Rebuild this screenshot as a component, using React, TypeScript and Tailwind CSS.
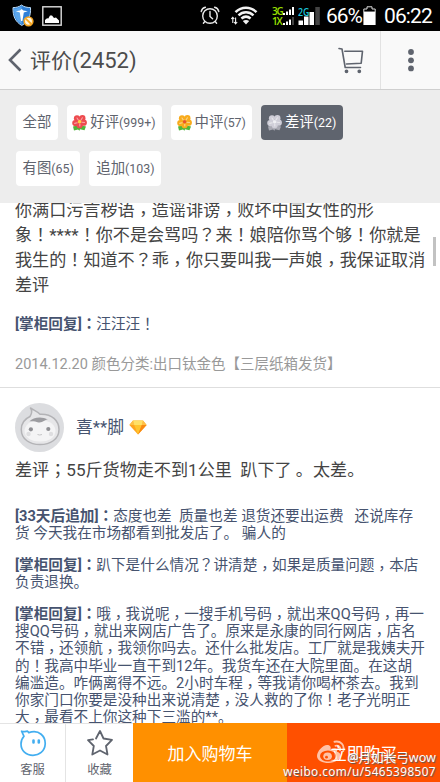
import type { ReactNode } from "react";

const FONT = "font-[Roboto,'Noto_Sans_CJK_SC',sans-serif]";

// Full-width marks sit in the middle of their cell, except the full stop.
// Zero leading keeps the second font from stretching the line.
function Cn({ children }: { children: string }) {
    return (
        <>
            {children.split(/([，！？：；])/).map((part, i) =>
                i % 2 ? (
                    <span
                        key={i}
                        className={`font-['Noto_Sans_CJK_TC',sans-serif] leading-[0] ${part === "，" ? "align-[-0.24em]" : "align-baseline"}`}
                    >
                        {part}
                    </span>
                ) : (
                    part
                )
            )}
        </>
    );
}

function Flower({ petal, center, leaf }: { petal: string; center: string; leaf: string }) {
    return (
        <svg width="15" height="16" viewBox="0 0 15 16" className="shrink-0">
            <path d="M1 11.5 5 10.5 7.5 12.5 10 10.5 14 11.5 12.5 15.2 8 14.2 7.5 15.8 6 14.5 2 15.4Z" fill={leaf} />
            <g fill={petal}>
                <circle cx="5" cy="3.3" r="3.1" />
                <circle cx="10.4" cy="3.2" r="3.1" />
                <circle cx="11.8" cy="7.7" r="3.1" />
                <circle cx="7.6" cy="10.2" r="3.1" />
                <circle cx="3.3" cy="8.1" r="3.1" />
            </g>
            <g stroke="#fff" strokeOpacity="0.5" strokeWidth="1.1" strokeLinecap="round">
                <path d="M5 3 6.3 5M10.4 2.8 9 5M12.5 7.5 10 7.3M7.8 11V9M2.7 8.4 5.2 7.8" />
            </g>
            <circle cx="7.6" cy="6.7" r="1.8" fill={center} />
        </svg>
    );
}

function Chip({ label, count, icon, active }: { label: string; count?: string; icon?: ReactNode; active?: boolean }) {
    return (
        <div
            className={`flex h-[35px] items-center rounded-[4px] whitespace-nowrap ${icon ? "pl-[5.5px]" : "pl-[7px]"} pr-[6.5px] ${
                active ? "bg-[#5f646e] text-white" : "bg-white text-[#5f646e]"
            }`}
        >
            {icon}
            <span className={`mt-[2px] text-[14.4px] leading-none ${icon ? "ml-[3px]" : ""}`}>{label}</span>
            {count && <span className="mt-px text-[12.4px] leading-none">({count})</span>}
        </div>
    );
}

function MiniBars({ top }: { top: number }) {
    return (
        <svg width="11" height="8" viewBox="0 0 11 8">
            {[2, 3.5, 5.5, 8].map((h, i) => (
                <rect key={i} x={i * 3} y={8 - h} width="2" height={h} fill={i < top ? "#fff" : "#444"} />
            ))}
        </svg>
    );
}

function StatusBar() {
    return (
        <div className="flex h-[31px] shrink-0 items-center bg-black text-white">
            <svg width="22" height="23" viewBox="0 0 22 23" className="ml-[11.5px]">
                <path d="M9.5 1C7 3 4 3.6 1 3.6 0.8 12 3 17.5 9.8 21.5 16.5 17.5 19 12 18.5 3.6 15.5 3.6 12 3 9.5 1Z" fill="#2f80d8" stroke="#b9d9f5" strokeWidth="1" />
                <path d="M9.6 2C7.5 3.8 4.7 4.5 2 4.6 2 11 3.5 16.5 9.6 20Z" fill="#5ba6ec" />
                <path d="M3.8 7.3 8 6.6 9.7 5 11.4 6.6 15.8 7.3 11.8 8.6 10.4 17 9.1 17 7.8 8.6Z" fill="#fff" />
                <circle cx="16.5" cy="17.3" r="4.3" fill="#fff6df" stroke="#f5a623" strokeWidth="1.7" />
                <path d="m13.8 14.6 5.4 5.4" stroke="#f5a623" strokeWidth="1.8" />
            </svg>
            <svg width="20" height="20" viewBox="0 0 20 20" className="ml-[8.5px]">
                <rect x="0.8" y="0.8" width="18.4" height="18.4" fill="none" stroke="#ddd" strokeWidth="1.4" />
                <path d="M3 17V14L5 12.2 6.3 12.4 8 9.6 10 9.4 12 12 14 11.5 17 14.5V17Z" fill="#fff" />
            </svg>
            <svg width="20" height="19" viewBox="0 0 20 19" className="ml-[138px]" fill="none" stroke="#e8e8e8" strokeWidth="1.4" strokeLinecap="round">
                <circle cx="10" cy="10" r="7.3" />
                <path d="M10 5.5V10.5L12.6 12.8M1.2 5.5C1.8 3 3 1.8 5.4 1.3M18.8 5.5C18.2 3 17 1.8 14.6 1.3M4.8 15.5 3.4 17.3M15.2 15.5 16.6 17.3" />
            </svg>
            <svg width="27" height="20" viewBox="0 0 27 20" className="ml-[11px]" fill="none" stroke="#f2f2f2">
                <path d="M4.5 6.2C10.5 0.3 19.5 0.3 25.5 6.2M7.5 9.3C11.8 5.3 18.2 5.3 22.5 9.3M10.4 12.5C13.2 10.2 16.8 10.2 19.6 12.5" strokeWidth="2.5" />
                <path d="M11.8 15 15 18.5 18.2 15C16.4 13.5 13.6 13.5 11.8 15Z" fill="#f2f2f2" stroke="none" />
                <path d="M1.8 11.5V17M0.3 13 1.8 11.3 3.3 13M4.6 11.5V17M3.2 16 4.6 17.8 6.2 16" strokeWidth="1.1" />
            </svg>
            <div className="ml-[14px] flex flex-col font-['Open_Sans',sans-serif] text-[10px] leading-[10px] font-semibold text-[#9be000]">
                <div className="flex h-[10px] items-center">
                    <span className="w-[11px] tracking-[-1.2px]">3G</span>
                    <MiniBars top={4} />
                </div>
                <div className="flex h-[10px] items-center">
                    <span className="w-[11px] tracking-[-1.2px]">1X</span>
                    <MiniBars top={3} />
                </div>
            </div>
            <svg width="22" height="20" viewBox="0 0 22 20" className="ml-[4px]">
                <path d="M0.5 14.5H5V19H0.5ZM6 10.5H10.5V19H6ZM11.5 6H16V19H11.5Z" fill="#fff" />
                <path d="M17.3 1H21.8V19H17.3Z" fill="#444" />
                <text x="0" y="9.5" fill="#1cc7dc" fontFamily="Open Sans, sans-serif" fontSize="11" fontWeight="600" textLength="11.5" lengthAdjust="spacingAndGlyphs">2G</text>
            </svg>
            <span className="ml-[6px] w-[37px] text-[21px] leading-[24px] tracking-[-1.1px]">66%</span>
            <svg width="13" height="20" viewBox="0 0 13 20">
                <path d="M4 0.8H9V3H12.2V6H0.8V3H4Z" fill="none" stroke="#ddd" strokeWidth="1" />
                <path d="M0.4 6H12.6V19H0.4Z" fill="#fff" />
            </svg>
            <span className="ml-[8px] text-[21px] leading-[24px] tracking-[-0.9px]">06:22</span>
        </div>
    );
}

function Header() {
    return (
        <div className="flex h-[59px] shrink-0 items-center border-b border-[#cfcfcf] bg-[#f9f9f9]">
            <svg width="14" height="24" viewBox="0 0 14 24" className="ml-[7.5px]" fill="none" stroke="#5f646e" strokeWidth="2.6">
                <path d="M12.5 1.5 2 12 12.5 22.5" />
            </svg>
            <span className="ml-[8.5px] pt-px text-[21px] leading-none text-[#4c4c4c]">
                评价<span className="text-[22px]">(2452)</span>
            </span>
            <svg width="28" height="28" viewBox="0 0 28 28" className="mr-[15px] ml-auto" fill="none" stroke="#5f646e" strokeWidth="1.6" strokeLinecap="round" strokeLinejoin="round">
                <path d="M2 2.5 5 3 8.2 21.5H23.5" />
                <path d="M7.8 5.2H25.5L24.2 17.2 9.5 18" />
                <circle cx="9.5" cy="25.3" r="1.1" fill="#5f646e" />
                <circle cx="22.3" cy="25.3" r="1.1" fill="#5f646e" />
            </svg>
            <div className="flex h-full w-[60px] items-center border-l border-[#e2e2e2]">
                <svg width="8" height="24" viewBox="0 0 8 24" className="ml-[26px]" fill="#5f646e">
                    <circle cx="4" cy="4" r="2.9" />
                    <circle cx="4" cy="12.3" r="2.9" />
                    <circle cx="4" cy="20.4" r="2.9" />
                </svg>
            </div>
        </div>
    );
}

function Filters() {
    return (
        <div className="flex h-[113px] shrink-0 flex-col gap-[11px] bg-[#ededed] pt-[15px] pl-[15.5px]">
            <div className="flex gap-[9px]">
                <Chip label="全部" />
                <Chip label="好评" count="999+" icon={<Flower petal="#ee4b4f" center="#ffd23f" leaf="#4fb63a" />} />
                <Chip label="中评" count="57" icon={<Flower petal="#f8ab1c" center="#e8552a" leaf="#4fb63a" />} />
                <Chip label="差评" count="22" active icon={<Flower petal="#cfced8" center="#f0f0f4" leaf="#a9a9b3" />} />
            </div>
            <div className="flex gap-[9px]">
                <Chip label="有图" count="65" />
                <Chip label="追加" count="103" />
            </div>
        </div>
    );
}

function Lines({ lines, className }: { lines: string[]; className?: string }) {
    return (
        <div className={`text-[17.1px] leading-[25px] whitespace-pre text-[#444] ${className ?? ""}`}>
            {lines.map((line) => (
                <div key={line} className="h-[25px]">
                    <Cn>{line}</Cn>
                </div>
            ))}
        </div>
    );
}

function Reply({ title, lines, className }: { title: string; lines: string[]; className: string }) {
    const [first, ...rest] = lines;
    return (
        <div className={`text-[14.65px] leading-[17.15px] whitespace-pre text-[#46536f] ${className}`}>
            <div className="h-[17.15px]">
                <b className="font-bold">
                    [{title}]<Cn>：</Cn>
                </b>
                <Cn>{first}</Cn>
            </div>
            {rest.map((line) => (
                <div key={line} className="h-[17.15px]">
                    <Cn>{line}</Cn>
                </div>
            ))}
        </div>
    );
}

function Avatar() {
    return (
        <svg width="49" height="49" viewBox="0 0 49 49">
            <circle cx="24.5" cy="24.5" r="24.5" fill="#dcdde0" />
            <path d="M15 13.5C17 10.5 17.5 8 15.5 5 19.5 7.5 22.5 8.5 25 11.2 37 10.5 44 18 44 26.5 44 36.5 35 41.5 25 41.5S6.3 36.5 6.3 26.5C6.3 20.5 9.5 16 15 13.5Z" fill="#e6e6e8" stroke="#b3b3b6" strokeWidth="1.5" strokeLinejoin="round" />
            <path d="M9.5 27C11.5 19 18 17.5 25 17.5S39 19 40.5 27C40.5 35.5 33 38.5 25 38.5S9.5 35.5 9.5 27Z" fill="#f4f4f5" />
            <path d="M14.5 18.3C18 14 27 13 33 16.5 29 16.5 28 20.3 22.5 19.2 19 18.1 17 18.8 14.5 18.3Z" fill="#9c9ca0" />
            <circle cx="15.9" cy="26.3" r="2.1" fill="#8f8f93" />
            <circle cx="33.3" cy="26" r="2.1" fill="#8f8f93" />
            <circle cx="13.5" cy="31" r="2.2" fill="#dedee0" />
            <circle cx="36" cy="31" r="2.2" fill="#dedee0" />
            <path d="M22.5 31.5Q24.7 32.5 27 31.5" fill="none" stroke="#c6c6c8" />
        </svg>
    );
}

function Reviews() {
    return (
        <div className="relative min-h-0 flex-1 overflow-hidden bg-white">
            <div className="-mt-[5px] px-[15px]">
                <Lines
                    lines={[
                        "你满口污言秽语，造谣诽谤，败坏中国女性的形",
                        "象！****！你不是会骂吗？来！娘陪你骂个够！你就是",
                        "我生的！知道不？乖，你只要叫我一声娘，我保证取消",
                        "差评",
                    ]}
                />
                <Reply className="mt-[18px]" title="掌柜回复" lines={["汪汪汪！"]} />
                <div className="mt-[21.5px] text-[14.5px] leading-[20px] whitespace-nowrap text-[#999]">
                    2014.12.20 颜色分类:出口钛金色【三层纸箱发货】
                </div>
            </div>
            <div className="mt-[12px] border-t border-[#dedede] px-[15px] pt-[15px]">
                <div className="flex items-center">
                    <Avatar />
                    <span className="ml-[12px] text-[16.8px] leading-none text-[#46536f]">喜**脚</span>
                    <svg width="18" height="15" viewBox="0 0 18 15" className="ml-[5px]">
                        <path d="M4 0.5H14L17.6 5 9 14.6 0.4 5Z" fill="#ffa51f" />
                        <path d="M4 0.5 5.2 5H0.4ZM14 0.5 12.8 5H17.6Z" fill="#ffc046" />
                        <path d="M4 0.5H14L12.8 5H5.2Z" fill="#ffe066" />
                        <path d="M5.2 5H12.8L9 14.6Z" fill="#ffc52e" />
                        <path d="M12.8 5H17.6L9 14.6Z" fill="#f98a12" />
                    </svg>
                </div>
                <Lines className="mt-[6px]" lines={["差评；55斤货物走不到1公里  趴下了 。太差。"]} />
                <Reply
                    className="mt-[25px]"
                    title="33天后追加"
                    lines={["态度也差  质量也差 退货还要出运费   还说库存", "货 今天我在市场都看到批发店了。 骗人的"]}
                />
                <Reply
                    className="mt-[15px]"
                    title="掌柜回复"
                    lines={["趴下是什么情况？讲清楚，如果是质量问题，本店", "负责退换。"]}
                />
                <Reply
                    className="mt-[15px]"
                    title="掌柜回复"
                    lines={[
                        "哦，我说呢，一搜手机号码，就出来QQ号码，再一",
                        "搜QQ号码，就出来网店广告了。原来是永康的同行网店，店名",
                        "不错，还领航，我领你吗去。还什么批发店。工厂就是我姨夫开",
                        "的！我高中毕业一直干到12年。我货车还在大院里面。在这胡",
                        "编滥造。咋俩离得不远。2小时车程，等我请你喝杯茶去。我到",
                        "你家门口你要是没种出来说清楚，没人救的了你！老子光明正",
                        "大，最看不上你这种下三滥的**。",
                    ]}
                />
            </div>
            <div className="absolute top-[34px] right-[4px] h-[29px] w-[3px] bg-[#c2c2c2]" />
        </div>
    );
}

function BottomBar() {
    return (
        <div className="relative flex h-[59px] shrink-0 bg-white text-[#5f646e]">
            <div className="flex w-[66px] flex-col items-center border-t border-r border-[#e4e4e4] pt-[5px]">
                <svg width="28" height="28" viewBox="0 0 28 28" fill="none" stroke="#42aef0" strokeWidth="1.7" strokeLinejoin="round" strokeLinecap="round">
                    <path d="M9.8 3.6C20.5 -0.2 26.5 8 26.2 15 25.8 22.5 20 26.3 14 26.3 7 26.3 2 21.5 2 15 2 12 3 9.5 5 7.3L2.6 2.2C5 3.2 6.5 2.4 8.6 2.2L9.8 3.6" />
                    <path d="M14.5 11.5V13.5M19.8 11.5V13.5" strokeWidth="2.6" />
                </svg>
                <span className="mt-[6.5px] text-[12.3px] leading-none">客服</span>
            </div>
            <div className="flex w-[67px] flex-col items-center border-t border-[#e4e4e4] pt-[5px]">
                <svg width="28" height="28" viewBox="0 0 28 28" fill="none" stroke="#5f646e" strokeWidth="1.8" strokeLinejoin="round" strokeLinecap="round">
                    <path d="M10 9.5 14 2 17.5 9.5 26 10.8 20 17 21.5 25.5 14 21.5 6.3 25.5 7.8 17 2 11.2 7 10.3" />
                </svg>
                <span className="mt-[6.5px] text-[12.3px] leading-none">收藏</span>
            </div>
            <div className="flex w-[154px] items-center justify-center bg-[#ff9000] pt-[4px] text-[17px] text-white">加入购物车</div>
            <div className="flex flex-1 items-center justify-center bg-[#ff5000] pt-[4px] text-[16.8px] text-white">立即购买</div>
            {/* watermark */}
            <div className="absolute right-[4px] bottom-[4px] flex flex-col items-end whitespace-nowrap text-white [text-shadow:1px_1px_1px_#555]">
                <span className="font-['Noto_Sans','Noto_Sans_CJK_SC',sans-serif] text-[12.6px] leading-[14px]">@月如长弓wow</span>
                <span className="font-['Noto_Sans',sans-serif] text-[11.8px] leading-[13px] tracking-[0.4px]">weibo.com/u/5465398507</span>
            </div>
            <svg width="30" height="24" viewBox="0 0 30 24" className="absolute top-[17px] left-[316px] opacity-65">
                <path d="M11 5C7 5 1 11 1 16 1 20.5 6.5 23 12.5 23 19.5 23 24.5 19 24.5 15.5 24.5 13.5 23 12.3 21 11.8 22 9 20 7.5 14.5 9.5 15.3 6.5 14 5 11 5Z" fill="#fff" />
                <ellipse cx="12" cy="16" rx="8" ry="5.5" fill="#ff5000" />
                <ellipse cx="11.6" cy="16.3" rx="4.3" ry="3.8" fill="#fff" />
                <circle cx="10.5" cy="17.2" r="1.4" fill="#ff5000" />
                <path d="M18.5 1.8C24.5 0.5 29 5 27.3 11M19.5 5.8C22.8 5 24.7 7.5 24 10.2" fill="none" stroke="#fff" strokeWidth="1.9" strokeLinecap="round" />
            </svg>
        </div>
    );
}

export default function App() {
    return (
        <div className={`flex h-[782px] w-[440px] flex-col overflow-hidden ${FONT}`}>
            <StatusBar />
            <Header />
            <Filters />
            <Reviews />
            <BottomBar />
        </div>
    );
}
